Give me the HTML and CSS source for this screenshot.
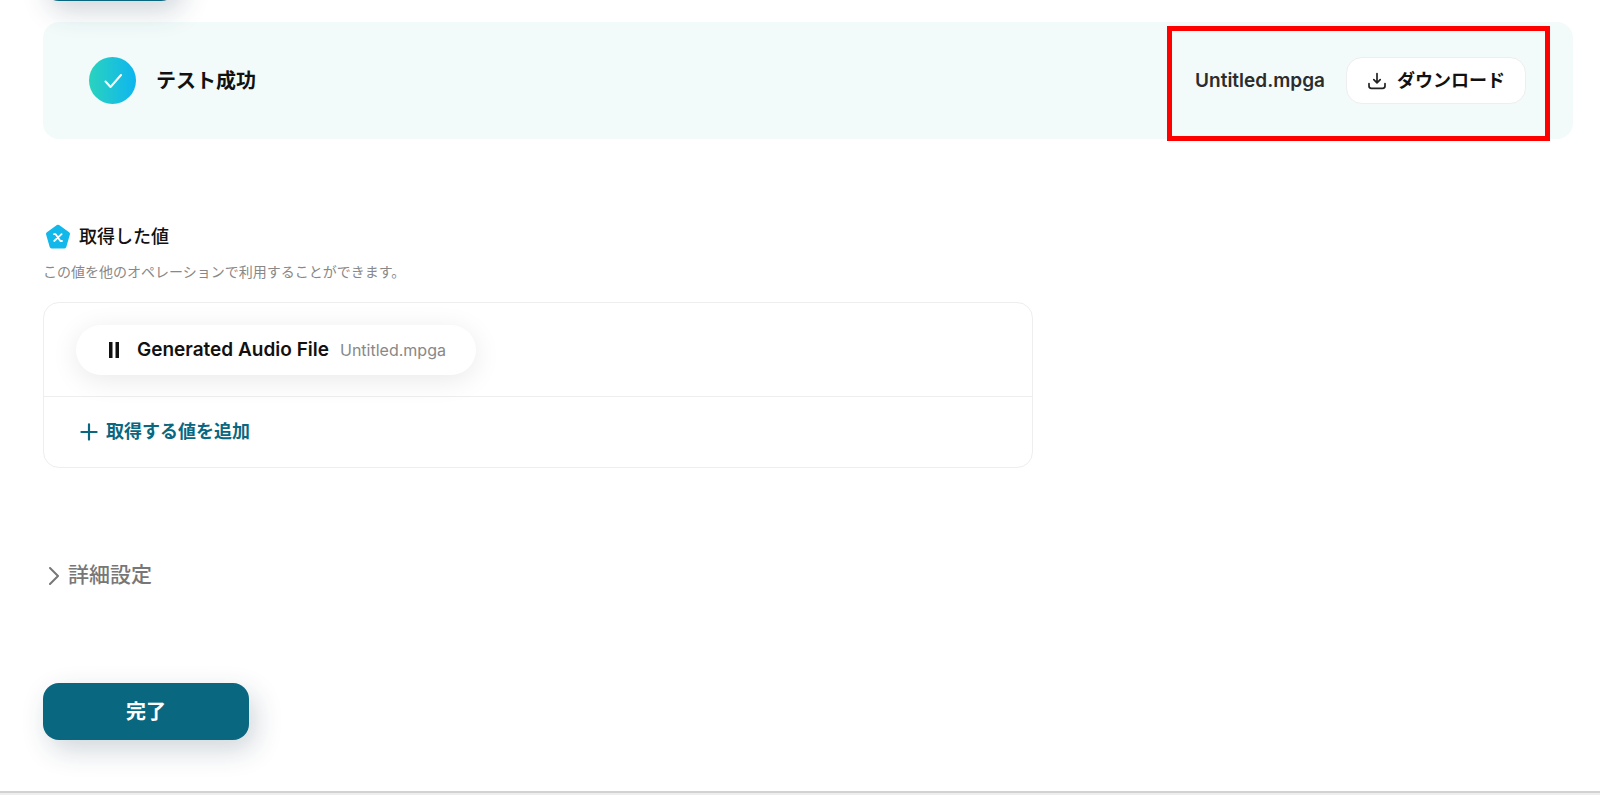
FILE: index.html
```html
<!DOCTYPE html>
<html lang="ja">
<head>
    <meta charset="UTF-8">
    <meta name="viewport" content="width=device-width, initial-scale=1.0">
    <title>テスト成功</title>
    <link rel="stylesheet" href="styles.css">
</head>
<body>
    <main class="page">
        <button class="primary test-button" type="button" aria-label="テスト"></button>

        <section class="banner">
            <span class="status-icon">
                <svg width="20" height="20" viewBox="0 0 20 20" fill="none" stroke="#fff" stroke-width="2" stroke-linecap="round" stroke-linejoin="round"><path d="M2.5 10.5l5 5.5L18 4"/></svg>
            </span>
            <h2 class="banner-title">テスト成功</h2>
            <span class="file-name">Untitled.mpga</span>
            <button class="download" type="button">
                <svg width="20" height="20" viewBox="0 0 20 20" fill="none" stroke="#222" stroke-width="1.7" stroke-linecap="round" stroke-linejoin="round"><path d="M10 2.5v9M6.8 8.6L10 11.8l3.2-3.2M2 12.5v2.5a2.3 2.3 0 0 0 2.3 2.3h11.4a2.3 2.3 0 0 0 2.3-2.3v-2.5"/></svg>
                ダウンロード
            </button>
            <div class="highlight"></div>
        </section>

        <section class="output">
            <h3 class="output-title">
                <svg width="26" height="26" viewBox="0 0 26 26"><path d="M11.9 1a2 2 0 0 1 2.2 0l10 7.2a2 2 0 0 1 .8 2.3l-3.6 12.6a2 2 0 0 1-1.9 1.5H6.6a2 2 0 0 1-1.9-1.5L1.1 10.5a2 2 0 0 1 .8-2.3z" fill="#12b8ea"/><path d="M9 10.2h1.6l4.8 6.8H17M16.6 10.2L9.2 17" fill="none" stroke="#fff" stroke-width="1.8" stroke-linecap="round" stroke-linejoin="round"/></svg>
                取得した値
            </h3>
            <p class="output-note">この値を他のオペレーションで利用することができます。</p>
            <div class="card">
                <div class="card-row">
                    <div class="pill">
                        <svg width="12" height="18" viewBox="0 0 12 18" fill="#111"><path d="M1 1h3.5v16H1zM7.5 1H11v16H7.5z"/></svg>
                        <span class="pill-name">Generated Audio File</span>
                        <span class="pill-value">Untitled.mpga</span>
                    </div>
                </div>
                <div class="card-row add-row">
                    <button class="add" type="button">
                        <svg width="18" height="18" viewBox="0 0 18 18" fill="none" stroke="#0a6780" stroke-width="2.2" stroke-linecap="round"><path d="M9 1.4v15.2M1.4 9h15.2"/></svg>
                        取得する値を追加
                    </button>
                </div>
            </div>
        </section>

        <button class="details" type="button">
            <svg width="12" height="20" viewBox="0 0 12 20" fill="none" stroke="#777" stroke-width="2" stroke-linecap="round" stroke-linejoin="round"><path d="M2 3l8 8-8 8"/></svg>
            詳細設定
        </button>

        <button class="primary done" type="button">完了</button>
    </main>
    <footer class="page-end"></footer>
</body>
</html>
```

FILE: styles.css
```css
* {
    box-sizing: border-box;
}

body {
    margin: 0;
    background-color: #fff;
    color: #111;
    font-family: Inter, "Noto Sans CJK JP", sans-serif;
    font-size: 18px;
    line-height: 24px;
    overflow: hidden;
}

h2, h3, p {
    margin: 0;
}

button {
    border: none;
    background: none;
    padding: 0;
    color: inherit;
    font: inherit;
    font-weight: 500;
    cursor: pointer;
}

svg {
    flex: none;
}

.page {
    display: flex;
    flex-direction: column;
    align-items: flex-start;
    padding: 0 27px 51px 43px;
}

.primary {
    width: 206px;
    height: 57px;
    border-radius: 16px;
    background-color: #0a6780;
    color: #fff;
    font-size: 20px;
    font-weight: 700;
    box-shadow: 6px 10px 28px rgba(20, 50, 70, 0.2);
}

.test-button {
    position: relative;
    z-index: 1;
    width: 134px;
    margin-top: -56px;
}

.banner {
    position: relative;
    align-self: stretch;
    display: flex;
    align-items: center;
    height: 117px;
    margin-top: 21px;
    padding: 0 47px 0 46px;
    border-radius: 16px;
    background-color: #f2fbfa;
}

.status-icon {
    display: flex;
    align-items: center;
    justify-content: center;
    width: 47px;
    height: 47px;
    margin-right: 20px;
    border-radius: 50%;
    background-image: linear-gradient(90deg, #2ad3bd, #0eb5f0);
}

.banner-title {
    flex: 1;
    font-size: 20px;
    font-weight: 700;
}

.file-name {
    margin-right: 21px;
    color: #2c2c2c;
    font-size: 19px;
    font-weight: 600;
}

.download {
    display: flex;
    align-items: center;
    gap: 10px;
    height: 47px;
    padding: 0 20px;
    border: 1px solid #eee;
    border-radius: 16px;
    background-color: #fff;
    font-weight: 700;
}

/* frame around the file actions */
.highlight {
    position: absolute;
    top: 4px;
    right: 23px;
    bottom: -2px;
    width: 383px;
    border: 5px solid #f00;
    pointer-events: none;
}

.output {
    width: 100%;
    max-width: 990px;
    margin-top: 84px;
}

.output-title {
    display: flex;
    align-items: center;
    gap: 8px;
    padding-left: 2px;
    font-size: 18px;
    font-weight: 500;
    line-height: 28px;
}

.output-note {
    margin-top: 9px;
    color: #888;
    font-size: 14px;
}

.card {
    margin-top: 18px;
    border: 1px solid #eee;
    border-radius: 16px;
}

.card-row {
    display: flex;
    align-items: center;
    height: 93px;
    padding: 0 32px;
}

.add-row {
    height: 71px;
    padding: 0 36px;
    border-top: 1px solid #eee;
}

.pill {
    display: flex;
    align-items: center;
    height: 50px;
    padding: 0 30px 0 32px;
    border-radius: 25px;
    background-color: #fff;
    box-shadow: 0 5px 28px rgba(0, 0, 0, 0.09);
}

.pill-name {
    margin: 0 11px 0 17px;
    font-size: 19px;
    font-weight: 600;
}

.pill-value {
    color: #888;
    font-size: 16px;
}

.add {
    display: flex;
    align-items: center;
    gap: 8px;
    color: #0a6780;
    font-weight: 700;
}

.details {
    display: flex;
    align-items: center;
    gap: 8px;
    margin-top: 91px;
    padding-left: 5px;
    color: #777;
    font-size: 21px;
    font-weight: 500;
    line-height: 32px;
}

.done {
    margin-top: 92px;
}

.page-end {
    height: 6px;
    border-top: 2px solid #d2d2d2;
    background-color: #eee;
}
```
